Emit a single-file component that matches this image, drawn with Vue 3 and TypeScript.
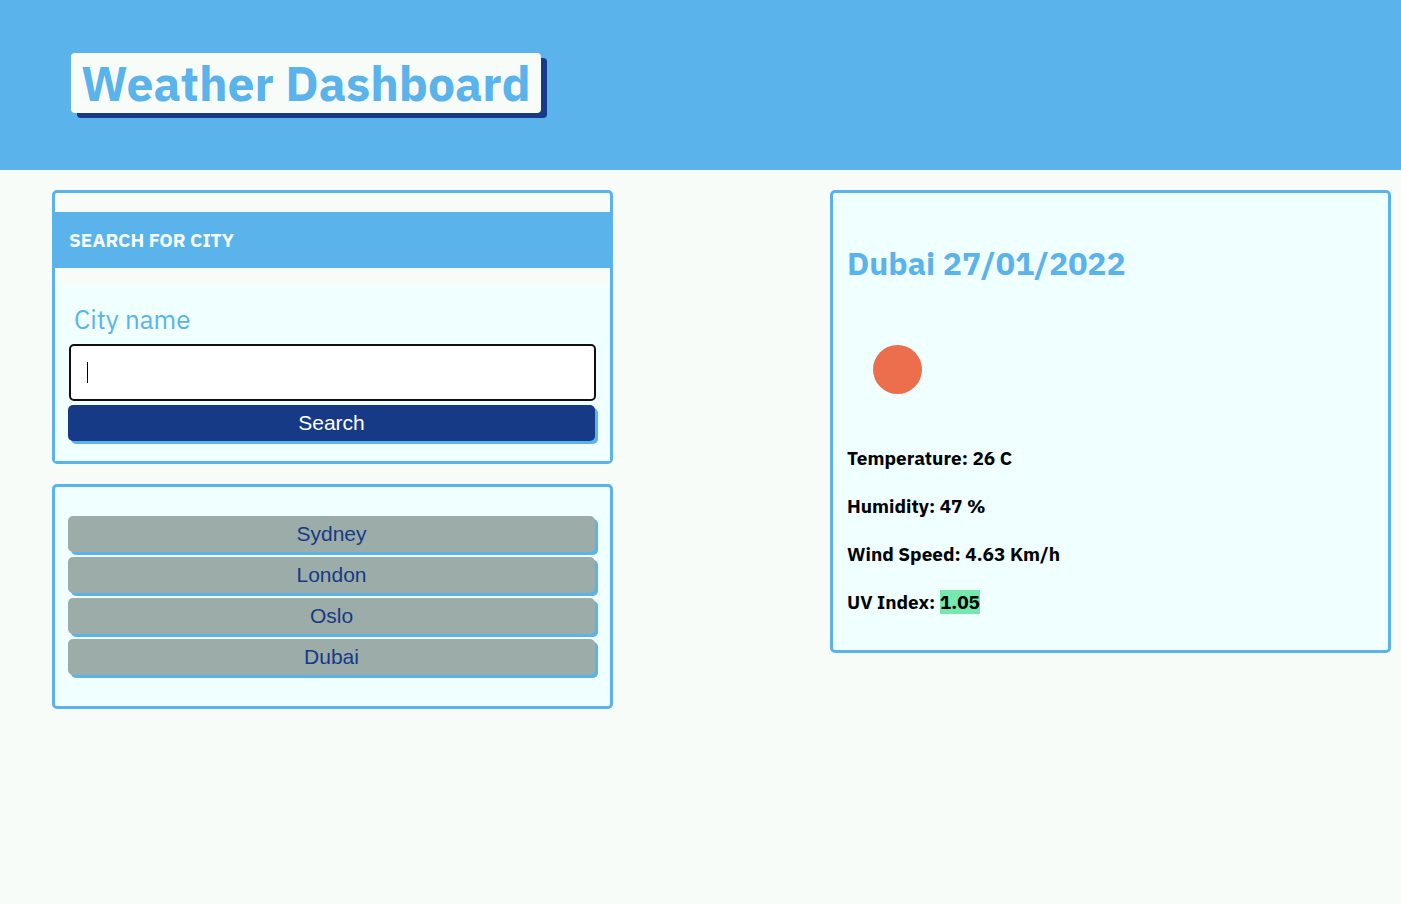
<script setup lang="ts">
import { ref } from 'vue'

interface Reading {
  label: string
  value: string
  highlight?: boolean
}

const city = ref<string>('')
const history: string[] = ['Sydney', 'London', 'Oslo', 'Dubai']
const readings: Reading[] = [
  { label: 'Temperature', value: '26 C' },
  { label: 'Humidity', value: '47 %' },
  { label: 'Wind Speed', value: '4.63 Km/h' },
  { label: 'UV Index', value: '1.05', highlight: true },
]
</script>

<template>
  <div class="page">
    <header class="banner">
      <h1 class="title">Weather Dashboard</h1>
    </header>
    <main class="content">
      <div class="column">
        <section class="card search">
          <h2 class="search-heading">SEARCH FOR CITY</h2>
          <form class="search-form" @submit.prevent>
            <label class="search-label" for="city">City name</label>
            <div class="field">
              <input id="city" v-model="city" class="field-input" type="text" autocomplete="off" />
              <span v-if="!city" class="caret" aria-hidden="true"></span>
            </div>
            <button class="btn primary" type="submit">Search</button>
          </form>
        </section>
        <section class="card history">
          <button v-for="name in history" :key="name" class="btn" type="button">{{ name }}</button>
        </section>
      </div>
      <section class="column card weather">
        <h2 class="weather-title">Dubai 27/01/2022</h2>
        <svg class="weather-icon" viewBox="0 0 100 100" role="img" aria-label="Clear sky">
          <circle cx="50.5" cy="48.5" r="24.5" fill="#ec6e4c" />
        </svg>
        <p v-for="item in readings" :key="item.label" class="reading">
          {{ item.label }}: <span :class="{ uv: item.highlight }">{{ item.value }}</span>
        </p>
      </section>
    </main>
  </div>
</template>

<style>
body {
  background: #f8fcf8;
}
</style>

<style scoped>
.page {
  --sky: #5ab3ea;
  --navy: #163a85;
  --paper: #f8fcf8;
  --ice: #f0ffff;
  min-height: 100vh;
  background: var(--paper);
  font-family: "IBM Plex Sans", "Noto Sans", sans-serif;
}
.page * {
  box-sizing: border-box;
}
.banner {
  display: flex;
  align-items: flex-start;
  height: 170px;
  padding: 53px 71px;
  background: var(--sky);
}
.title {
  margin: 0;
  padding: 0 10px;
  border-radius: 4px;
  background: var(--paper);
  box-shadow: 6px 5px 0 var(--navy);
  color: var(--sky);
  font-size: 48px;
  font-weight: 700;
  line-height: 60px;
}
.content {
  display: flex;
  align-items: flex-start;
  justify-content: space-between;
  padding: 20px 10px 20px 52px;
}
.column {
  flex: 0 0 41.9%;
}
.card {
  border: 3px solid var(--sky);
  border-radius: 5px;
  background: var(--ice);
}
.search {
  padding-top: 19px;
  background: var(--paper);
}
.search-heading {
  margin: 0 0 18px;
  padding: 0 14px;
  background: var(--sky);
  color: var(--paper);
  font-size: 19px;
  font-weight: 700;
  line-height: 56px;
}
.search-form {
  padding: 16px 15px 20px 13px;
  background: var(--ice);
}
.search-label {
  display: block;
  margin-bottom: 8px;
  padding-left: 6px;
  color: var(--sky);
  font-size: 26px;
  line-height: 34px;
}
.field {
  position: relative;
  margin: 0 -1px 4px 1px;
}
.field-input {
  display: block;
  width: 100%;
  height: 57px;
  padding: 0 16px;
  border: 2px solid #101010;
  border-radius: 5px;
  background: #fff;
  color: #000;
  font: 18px "Liberation Sans", Arial, sans-serif;
}
.caret {
  position: absolute;
  top: 18px;
  left: 18px;
  width: 1px;
  height: 21px;
  background: #000;
}
.btn {
  display: block;
  width: 100%;
  height: 36px;
  padding: 0;
  border: 0;
  border-radius: 5px;
  background: #9cada9;
  box-shadow: 3px 3px 0 var(--sky);
  color: var(--navy);
  font: 21px "Liberation Sans", Arial, sans-serif;
}
.primary {
  background: var(--navy);
  color: #fff;
}
.history {
  display: grid;
  gap: 5px;
  margin-top: 20px;
  padding: 29px 15px 31px 13px;
}
.weather {
  padding: 48px 14px 24px;
}
.weather-title {
  margin: 0 0 36px;
  color: var(--sky);
  font-size: 32px;
  font-weight: 700;
  line-height: 44px;
}
.weather-icon {
  display: block;
  width: 100px;
  height: 100px;
  margin-bottom: 13px;
}
.reading {
  margin: 0;
  color: #000;
  font-size: 19px;
  font-weight: 700;
  line-height: 48px;
}
.uv {
  background: #76e7ae;
}
</style>
